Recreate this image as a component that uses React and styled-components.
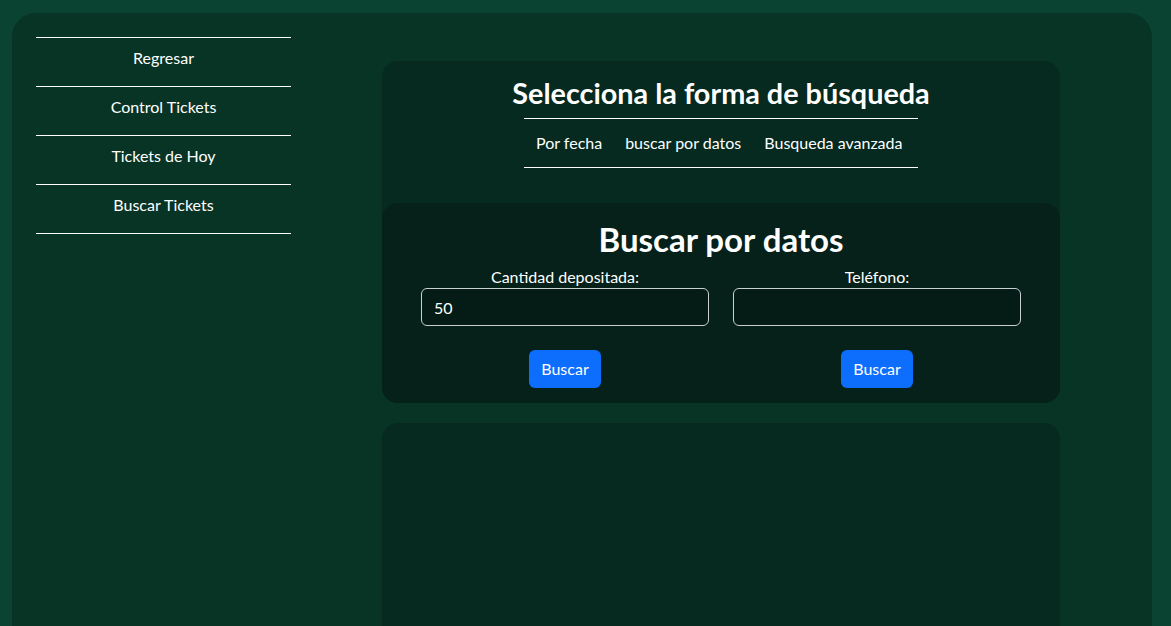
import React from "react";
import styled, { createGlobalStyle } from "styled-components";

const Global = createGlobalStyle`
  html, body { margin: 0; padding: 0; }
  body {
    background: #0a4331;
    font-family: Lato, "Noto Sans", sans-serif;
    color: #ffffff;
    font-size: 16px;
    line-height: 1.5;
  }
  * { box-sizing: border-box; }
`;

const Page = styled.div`
  padding: 13px 19px 0 12px;
`;

const Shell = styled.div`
  background: #083426;
  border-radius: 24px 24px 0 0;
  padding: 24px 24px 40px 24px;
  display: grid;
  grid-template-columns: 255px 1fr;
  min-height: 640px;
`;

const Sidebar = styled.nav`
  display: flex;
  flex-direction: column;
  align-self: start;
  border-top: 1px solid #ffffff;
`;

const SideLink = styled.a`
  display: block;
  height: 49px;
  padding-bottom: 8px;
  line-height: 40px;
  text-align: center;
  color: #ffffff;
  text-decoration: none;
  border-bottom: 1px solid #ffffff;
  font-size: 16px;
`;

const Main = styled.main`
  padding: 24px 0 0 91px;
  display: flex;
  flex-direction: column;
  gap: 20px;
`;

const Card = styled.section`
  width: 678px;
  background: ${(p) => (p.$deep ? "#05211a" : "#062a1f")};
  border-radius: 16px;
  display: flex;
  flex-direction: column;
  align-items: center;
  min-height: ${(p) => p.$min || "0"};
`;

const SelectorTitle = styled.h3`
  margin: 15px 0 8px;
  font-size: 28.8px;
  font-weight: 700;
  line-height: 34px;
`;

const Tabs = styled.ul`
  list-style: none;
  margin: 0 0 35px;
  padding: 0;
  display: flex;
  width: 394px;
  border-top: 1px solid #ffffff;
  border-bottom: 1px solid #ffffff;
`;

const Tab = styled.li`
  padding: 12px 11.5px;
  line-height: 24px;
  &:first-child { padding-left: 12px; }
  &:last-child { padding-right: 12px; }
`;

const SearchTitle = styled.h2`
  margin: 17px 0 7px;
  font-size: 33px;
  font-weight: 700;
  line-height: 38px;
`;

const FieldRow = styled.div`
  display: grid;
  grid-template-columns: 312px 312px;
  padding: 0 27px 15px;
`;

const Field = styled.div`
  display: flex;
  flex-direction: column;
  align-items: center;
  padding: 0 12px;
`;

const Label = styled.label`
  line-height: 23px;
  font-size: 16px;
`;

const Input = styled.input`
  width: 100%;
  height: 38px;
  background: #041c15;
  border: 1px solid #c9cfd3;
  border-radius: 6px;
  color: #ffffff;
  font: inherit;
  font-size: 16px;
  padding: 6px 12px;
  outline: none;
`;

const Button = styled.button`
  margin-top: 24px;
  height: 38px;
  padding: 6px 12px;
  background: #0d6efd;
  color: #ffffff;
  border: 0;
  border-radius: 6px;
  font: inherit;
  font-size: 16px;
  cursor: pointer;
`;

export default function App() {
  return (
    <>
      <Global />
      <Page>
        <Shell>
          <Sidebar>
            <SideLink>Regresar</SideLink>
            <SideLink>Control Tickets</SideLink>
            <SideLink>Tickets de Hoy</SideLink>
            <SideLink>Buscar Tickets</SideLink>
          </Sidebar>
          <Main>
            <Card>
              <SelectorTitle>Selecciona la forma de búsqueda</SelectorTitle>
              <Tabs>
                <Tab>Por fecha</Tab>
                <Tab>buscar por datos</Tab>
                <Tab>Busqueda avanzada</Tab>
              </Tabs>
              <Card $deep>
                <SearchTitle>Buscar por datos</SearchTitle>
                <FieldRow>
                  <Field>
                    <Label>Cantidad depositada:</Label>
                    <Input defaultValue="50" />
                    <Button>Buscar</Button>
                  </Field>
                  <Field>
                    <Label>Teléfono:</Label>
                    <Input />
                    <Button>Buscar</Button>
                  </Field>
                </FieldRow>
              </Card>
            </Card>
            <Card $min="260px" />
          </Main>
        </Shell>
      </Page>
    </>
  );
}
